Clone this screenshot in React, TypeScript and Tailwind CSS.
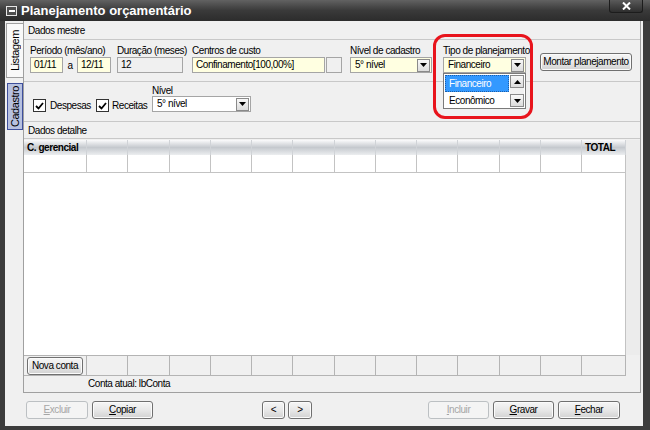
import React from 'react';

const cols = 12;

const Btn = ({ children, className = '', disabled = false }: { children: React.ReactNode; className?: string; disabled?: boolean }) => (
  <div
    className={`shrink-0 h-[18px] flex items-center justify-center rounded-[3px] border leading-none ${
      disabled
        ? 'border-[#bcc0c3] text-[#a6a6a6] bg-[#f4f4f4]'
        : 'border-[#707070] text-black bg-linear-to-b from-[#f6f6f6] via-[#e8e8e8] to-[#d2d2d2] shadow-[inset_0_0_0_1px_#fbfbfb]'
    } ${className}`}
  >
    {children}
  </div>
);

const Arrow = ({ up = false }: { up?: boolean }) => (
  <svg width="7" height="4" viewBox="0 0 7 4">
    {up ? <path d="M0 4 L3.5 0 L7 4 Z" fill="#000" /> : <path d="M0 0 L7 0 L3.5 4 Z" fill="#000" />}
  </svg>
);

const ArrowBtn = ({ up = false, className = '' }: { up?: boolean; className?: string }) => (
  <div className={`shrink-0 w-[13px] h-[13px] flex items-center justify-center border border-[#8a8a8a] bg-linear-to-b from-[#f8f8f8] to-[#dcdcdc] ${className}`}>
    <Arrow up={up} />
  </div>
);

const Combo = ({ value, className = '' }: { value: string; className?: string }) => (
  <div className={`h-[16px] flex items-center border border-[#a5a5a5] ${className}`}>
    <span className="flex-1 pl-[4px] leading-none overflow-hidden">{value}</span>
    <ArrowBtn className="mr-[1px]" />
  </div>
);

const Check = () => (
  <div className="shrink-0 w-[13px] h-[13px] border border-[#333] bg-white flex items-center justify-center">
    <svg width="9" height="8" viewBox="0 0 9 8">
      <path d="M1 4 L3.5 6.5 L8 1" stroke="#000" strokeWidth="1.8" fill="none" />
    </svg>
  </div>
);

const Cells = ({ header = false, footer = false }: { header?: boolean; footer?: boolean }) => (
  <>
    {Array.from({ length: cols }).map((_, i) => (
      <div
        key={i}
        className={
          header
            ? 'border-r border-[#d0d3d7] bg-linear-to-b from-[#fbfbfc] via-[#c5c9ce] to-[#eceef0]'
            : footer
            ? 'border-r border-b border-[#b4b4b4] bg-[#f0f0f0]'
            : 'border-r border-b border-[#c3c3c3] bg-white'
        }
      />
    ))}
  </>
);

export default function App() {
  return (
    <div className="w-[650px] h-[430px] bg-[#3c3c3c] flex flex-col relative font-['Liberation_Sans',Arial,sans-serif] text-[10px] tracking-[-0.45px] whitespace-nowrap text-black overflow-hidden">
      {/* title bar */}
      <div className="h-[21px] flex items-start bg-linear-to-b from-[#626262] via-[#3a3a3a] to-[#2c2c2c]">
        <div className="mt-[6px] ml-[6px] w-[11px] h-[10px] border border-[#e6e6e6] bg-[#505050] flex items-center justify-center">
          <div className="w-[6px] h-[2px] bg-white" />
        </div>
        <span className="ml-[4px] mt-[2px] text-white font-bold text-[13px] tracking-normal leading-[17px]">Planejamento orçamentário</span>
        <div className="ml-auto mr-[7px] w-[34px] h-[13px] rounded-b-[3px] border border-t-0 border-[#1c1c1c] bg-linear-to-b from-[#5a5a5a] to-[#2e2e2e] flex items-center justify-center">
          <svg width="9" height="8" viewBox="0 0 9 8">
            <path d="M1 0.5 L8 7.5 M8 0.5 L1 7.5" stroke="#fff" strokeWidth="2" />
          </svg>
        </div>
      </div>

      {/* body */}
      <div className="flex-1 ml-[5px] mr-[7px] mb-[4px] bg-[#f0f0f0] flex flex-col">
        <div className="flex h-[372px]">
          {/* side tabs */}
          <div className="w-[18px] flex flex-col items-end">
            <div className="mt-[2px] w-[17px] h-[55px] border border-r-0 border-[#a0a0a0] bg-[#f9f9f9] flex items-center justify-center">
              <span className="[writing-mode:vertical-rl] rotate-180 text-[11px] leading-none">Listagem</span>
            </div>
            <div className="mt-[5px] w-[16px] h-[47px] border border-[#3e4f9c] bg-[#b7c1e0] flex items-center justify-center">
              <span className="[writing-mode:vertical-rl] rotate-180 text-[11px] leading-none">Cadastro</span>
            </div>
          </div>

          {/* main panel */}
          <div className="w-[618px] flex flex-col border-l border-r border-b border-[#a0a0a0]">
            <div className="h-[19px] flex items-center pl-[4px] border-b border-[#c8c8c8]">Dados mestre</div>

            {/* row 1 */}
            <div className="h-[42px] flex items-start pl-[6px] pt-[5px] border-b border-[#c8c8c8]">
              <div className="w-[81px] shrink-0 flex flex-col">
                <span className="h-[12px] leading-[12px]">Período (mês/ano)</span>
                <div className="flex items-center">
                  <div className="w-[33px] h-[16px] border border-[#a5a5a5] bg-[#ffffe1] pl-[3px] leading-[14px]">01/11</div>
                  <span className="w-[14px] text-center">a</span>
                  <div className="w-[34px] h-[16px] border border-[#a5a5a5] bg-[#ffffe1] pl-[3px] leading-[14px]">12/11</div>
                </div>
              </div>
              <div className="ml-[6px] w-[66px] shrink-0 flex flex-col">
                <span className="h-[12px] leading-[12px]">Duração (meses)</span>
                <div className="w-[66px] h-[16px] border border-[#a5a5a5] bg-[#f0f0f0] pl-[3px] leading-[14px]">12</div>
              </div>
              <div className="ml-[9px] w-[150px] shrink-0 flex flex-col">
                <span className="h-[12px] leading-[12px]">Centros de custo</span>
                <div className="flex">
                  <div className="w-[133px] h-[16px] border border-[#a5a5a5] bg-[#ffffe1] pl-[3px] leading-[14px]">Confinamento[100,00%]</div>
                  <div className="ml-[1px] w-[16px] h-[16px] border border-[#a5a5a5] bg-[#f0f0f0]" />
                </div>
              </div>
              <div className="ml-[8px] w-[82px] shrink-0 flex flex-col">
                <span className="h-[12px] leading-[12px]">Nível de cadastro</span>
                <Combo value="5° nível" className="w-[82px] bg-[#ffffe1]" />
              </div>
              <div className="ml-[11px] w-[83px] shrink-0 flex flex-col">
                <span className="h-[12px] leading-[12px]">Tipo de planejamento</span>
                <div className="relative">
                  <Combo value="Financeiro" className="w-[83px] bg-[#ffffe1]" />
                  <div className="absolute left-0 top-[16px] w-[83px] h-[36px] border border-[#7a7a7a] bg-white flex p-[1px] z-10">
                    <div className="w-[64px] flex flex-col">
                      <div className="h-[17px] bg-[#3399ff] text-white pl-[3px] leading-[15px] border border-dotted border-[#1d5fa8]">Financeiro</div>
                      <div className="h-[16px] pl-[4px] leading-[18px]">Econômico</div>
                    </div>
                    <div className="ml-[1px] w-[14px] flex flex-col justify-between bg-[#f0f0f0]">
                      <ArrowBtn up className="w-[14px]" />
                      <ArrowBtn className="w-[14px]" />
                    </div>
                  </div>
                </div>
              </div>
              <Btn className="ml-[14px] mt-[8px] w-[92px]">Montar planejamento</Btn>
            </div>

            {/* row 2 */}
            <div className="h-[40px] flex items-start pl-[9px] pt-[3px] border-b border-[#c8c8c8]">
              <div className="w-[63px] shrink-0 mt-[13px] flex items-center">
                <Check />
                <span className="ml-[4px]">Despesas</span>
              </div>
              <div className="w-[56px] shrink-0 mt-[13px] flex items-center">
                <Check />
                <span className="ml-[3px]">Receitas</span>
              </div>
              <div className="shrink-0 flex flex-col">
                <span className="h-[11px] leading-[11px]">Nível</span>
                <Combo value="5° nível" className="w-[99px] bg-white" />
              </div>
            </div>

            <div className="h-[17px] flex items-center pl-[4px] border-b border-[#c8c8c8]">Dados detalhe</div>

            {/* grid */}
            <div className="h-[216px] pt-[1px] flex">
              <div className="w-[602px] flex flex-col bg-white">
                <div className="h-[15px] grid grid-cols-[63px_repeat(12,41.25px)_44px]">
                  <div className="border-r border-[#d0d3d7] bg-linear-to-b from-[#fbfbfc] via-[#c5c9ce] to-[#eceef0] pl-[3px] font-bold leading-[15px]">C. gerencial</div>
                  <Cells header />
                  <div className="border-r border-[#d0d3d7] bg-linear-to-b from-[#fbfbfc] via-[#c5c9ce] to-[#eceef0] pl-[3px] font-bold leading-[15px]">TOTAL</div>
                </div>
                <div className="h-[18px] grid grid-cols-[63px_repeat(12,41.25px)_44px]">
                  <div className="border-r border-b border-[#c3c3c3]" />
                  <Cells />
                  <div className="border-r border-b border-[#c3c3c3]" />
                </div>
                <div className="flex-1 border-r border-[#c3c3c3]" />
              </div>
              <div className="flex-1 bg-[#ececec]" />
            </div>

            {/* footer row */}
            <div className="h-[18px] flex">
              <div className="w-[602px] grid grid-cols-[63px_repeat(12,41.25px)_44px] border-t border-[#b4b4b4]">
                <div className="border-r border-b border-[#b4b4b4] bg-[#f0f0f0] pl-[3px] pt-[1px]">
                  <Btn className="w-[56px] h-[17px]">Nova conta</Btn>
                </div>
                <Cells footer />
                <div className="border-r border-b border-[#b4b4b4] bg-[#f0f0f0]" />
              </div>
            </div>

            <div className="flex-1 flex items-center pl-[64px] pt-[1px]">Conta atual:&nbsp;lbConta</div>
          </div>
        </div>

        {/* bottom buttons */}
        <div className="flex-1 flex items-center">
          <Btn disabled className="ml-[21px] w-[62px]"><span className="underline">E</span>xcluir</Btn>
          <Btn className="ml-[4px] w-[61px]"><span className="underline">C</span>opiar</Btn>
          <Btn className="ml-[109px] w-[23px]">&lt;</Btn>
          <Btn className="ml-[3px] w-[24px]">&gt;</Btn>
          <Btn disabled className="ml-[116px] w-[61px]"><span className="underline">I</span>ncluir</Btn>
          <Btn className="ml-[4px] w-[61px]"><span className="underline">G</span>ravar</Btn>
          <Btn className="ml-[4px] w-[62px]"><span className="underline">F</span>echar</Btn>
        </div>
      </div>

      {/* red highlight ring */}
      <div className="absolute left-[433px] top-[34px] w-[100px] h-[85px] border-[3px] border-[#e8141c] rounded-[12px] z-20 pointer-events-none" />
    </div>
  );
}
